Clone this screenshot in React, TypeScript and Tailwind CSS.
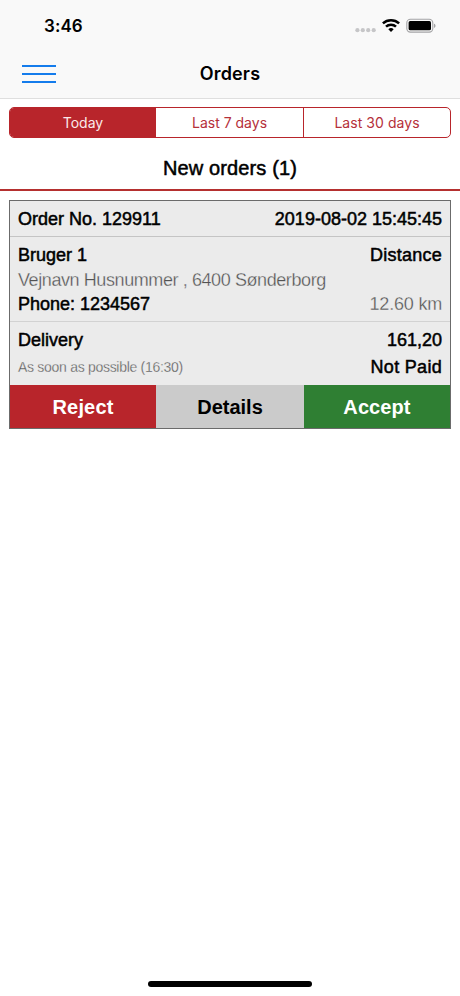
import type { ReactNode } from "react";

const helv = "font-['Liberation_Sans',Arial,sans-serif]";
const medium = `${helv} text-[18px] leading-[24px] text-black [-webkit-text-stroke:0.5px_#000] whitespace-nowrap`;
const light = `${helv} text-[#525252] [-webkit-text-stroke:0.3px_#ebebeb] whitespace-nowrap`;

function StatusBar() {
  return (
    <div className="flex h-[50px] items-center justify-between pl-[44px] pr-[24px]">
      <span className="pt-[1px] text-[17px] font-semibold leading-[24px] tracking-[0.1px]">3:46</span>
      <svg width="81" height="18" viewBox="0 0 81 18" className="mt-[1px]">
        <g fill="#c6c6c8">
          <circle cx="2.4" cy="13.2" r="2.1" />
          <circle cx="7.8" cy="13.2" r="2.1" />
          <circle cx="13.2" cy="13.2" r="2.1" />
          <circle cx="18.7" cy="13.2" r="2.1" />
        </g>
        <g fill="none" stroke="#000" strokeWidth="2.5">
          <path d="M27.9 6.300a12 12 0 0 1 16.200 0" />
          <path d="M31 9.700a7.200 7.200 0 0 1 10 0" />
        </g>
        <path d="M36 15l-2.700-2.700a3.800 3.800 0 0 1 5.400 0z" fill="#000" />
        <rect x="51.8" y="2.3" width="26" height="12.8" rx="3.6" fill="none" stroke="#a4a4a6" strokeWidth="1.1" />
        <rect x="53.6" y="4.1" width="22.4" height="9.2" rx="1.6" fill="#000" />
        <path d="M79 6.700c2 .7 2 3.500 0 4.200z" fill="#a4a4a6" />
      </svg>
    </div>
  );
}

function NavBar() {
  return (
    <div className="grid h-[48px] grid-cols-3 items-center">
      <div className="ml-[22px] flex w-[34px] flex-col gap-[6px]">
        <span className="h-[2px] bg-[#147cec]" />
        <span className="h-[2px] bg-[#147cec]" />
        <span className="h-[2px] bg-[#147cec]" />
      </div>
      <h1 className="text-center text-[18px] font-semibold leading-[24px] tracking-[0.15px]">Orders</h1>
    </div>
  );
}

function Tabs() {
  return (
    <div className="mx-[9px] mt-[8px] grid h-[31px] grid-cols-[146px_148px_1fr] overflow-hidden rounded-[5px] border border-[#b8252b] text-center text-[14px] leading-[30px] text-[#b5303a]">
      <div className="bg-[#b8252b] text-[#fbe9e9]">Today</div>
      <div className="border-r border-[#b8252b]">Last 7 days</div>
      <div className="tracking-[0.05px]">Last 30 days</div>
    </div>
  );
}

function Row({ children, className = "" }: { children: ReactNode; className?: string }) {
  return <div className={`flex items-center justify-between ${className}`}>{children}</div>;
}

function OrderCard() {
  return (
    <div className="mx-[9px] mt-[9px] h-[229px] border border-[#6b6b6b] bg-[#ebebeb]">
      <Row className="h-[36px] border-b border-[#c4c4c4] px-[8px]">
        <span className={medium}>Order No. 129911</span>
        <span className={medium}>2019-08-02 15:45:45</span>
      </Row>
      <div className="h-[85px] border-b border-[#d2d2d2] px-[8px] pt-[6px]">
        <Row className="h-[24px]">
          <span className={medium}>Bruger 1</span>
          <span className={`${medium} tracking-[0.25px]`}>Distance</span>
        </Row>
        <Row className="h-[25px]">
          <span className={`${light} text-[18px] leading-[24px] tracking-[-0.41px]`}>Vejnavn Husnummer , 6400 Sønderborg</span>
        </Row>
        <Row className="h-[24px]">
          <span className={medium}>Phone: 1234567</span>
          <span className={`${light} text-[18px] leading-[24px] tracking-[-0.2px]`}>12.60 km</span>
        </Row>
      </div>
      <div className="h-[63px] px-[8px] pt-[5px]">
        <Row className="h-[26px]">
          <span className={medium}>Delivery</span>
          <span className={medium}>161,20</span>
        </Row>
        <Row className="h-[27px]">
          <span className={`${light} text-[14px] leading-[24px] tracking-[-0.29px]`}>As soon as possible (16:30)</span>
          <span className={`${medium} tracking-[0.3px]`}>Not Paid</span>
        </Row>
      </div>
      <div className={`grid h-[43px] grid-cols-[146px_148px_1fr] overflow-hidden text-center text-[20px] font-bold leading-[45px] ${helv}`}>
        <div className="bg-[#b8252b] tracking-[0.15px] text-white">Reject</div>
        <div className="bg-[#cbcbcb] text-black">Details</div>
        <div className="bg-[#2f7f33] tracking-[0.1px] text-white">Accept</div>
      </div>
    </div>
  );
}

export default function App() {
  return (
    <div className="flex h-[996px] w-[460px] flex-col overflow-hidden bg-white font-['Inter',sans-serif] text-black">
      <header className="h-[99px] border-b border-[#dfdfdf] bg-[#f9f9f9]">
        <StatusBar />
        <NavBar />
      </header>
      <Tabs />
      <div className="mt-[2px] flex h-[51px] items-center justify-center border-b-2 border-[#b5302f] pt-[6px]">
        <h2 className={`${helv} text-[20px] leading-[24px] tracking-[0.12px] [-webkit-text-stroke:0.5px_#000]`}>New orders (1)</h2>
      </div>
      <OrderCard />
      <div className="mx-auto mb-[9px] mt-auto h-[6px] w-[164px] rounded-full bg-black" />
    </div>
  );
}
